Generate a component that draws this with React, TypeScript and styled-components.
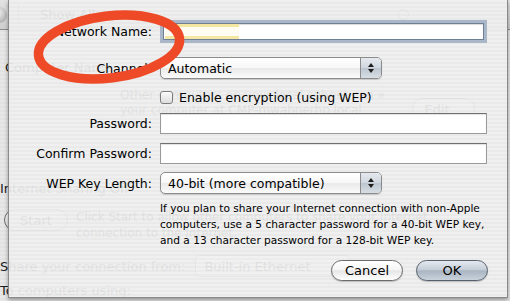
import React from "react"
import styled, { createGlobalStyle } from "styled-components"

const GlobalStyle = createGlobalStyle`
  html, body {
    margin: 0;
    padding: 0;
    background: #e6e6e6;
  }
  body {
    font-family: "DejaVu Sans", "Liberation Sans", sans-serif;
  }
`

const Screen = styled.div`
  position: relative;
  width: 510px;
  height: 301px;
  overflow: hidden;
  background: #e4e4e4;
`

/* ---------- the preferences window behind the sheet ---------- */

const Window = styled.div`
  display: flex;
  flex-direction: column;
  width: 100%;
  height: 100%;
  color: #1e1e1e;
  font-size: 13px;
  background: repeating-linear-gradient(
    to bottom,
    #e8e8e8 0 2px,
    #e2e2e2 2px 4px
  );
`

const Toolbar = styled.div`
  display: flex;
  align-items: center;
  height: 30px;
  box-sizing: border-box;
  border-bottom: 1px solid #8c8c8c;
  background: linear-gradient(#e2e2e2, #cfcfcf);
`

const ToolRound = styled.div`
  width: 16px;
  height: 16px;
  margin-left: -9px;
  border-radius: 50%;
  background: radial-gradient(circle at 40% 35%, #f4f4f4, #9a9a9a);
`

const ToolDivider = styled.div`
  width: 1px;
  height: 22px;
  margin-left: 11px;
  background: #9c9c9c;
`

const ToolLabel = styled.span`
  margin-left: 21px;
  font-size: 13px;
`

const ToolSearch = styled.div`
  width: 9px;
  height: 9px;
  margin-left: auto;
  margin-right: 101px;
  border: 1.5px solid #555;
  border-radius: 50%;
`

const PaneRow = styled.div<{ $top: number; $left?: number; $h?: number }>`
  display: flex;
  align-items: center;
  margin-top: ${(p) => p.$top}px;
  padding-left: ${(p) => p.$left ?? 0}px;
  height: ${(p) => (p.$h ? `${p.$h}px` : "auto")};
  white-space: nowrap;
`

const PaneText = styled.div`
  width: 292px;
  margin-left: 120px;
  font-size: 12px;
  line-height: 15px;
  overflow: hidden;
`

const GhostButton = styled.div<{ $w: number; $ml?: number; $mt?: number }>`
  display: flex;
  align-items: center;
  justify-content: center;
  align-self: flex-start;
  width: ${(p) => p.$w}px;
  height: 22px;
  margin-left: ${(p) => p.$ml ?? 0}px;
  margin-top: ${(p) => p.$mt ?? 0}px;
  box-sizing: border-box;
  border: 1px solid #6d6d6d;
  border-radius: 11px;
  background: linear-gradient(#ffffff, #dcdcdc);
  font-size: 13px;
`

const GhostPopup = styled.div`
  display: flex;
  align-items: center;
  width: 155px;
  height: 22px;
  margin-left: 10px;
  padding-left: 8px;
  box-sizing: border-box;
  border: 1px solid #777;
  border-radius: 5px;
  background: #fff;
`

const PaneDesc = styled.div`
  margin-left: 8px;
  font-size: 12px;
  line-height: 16px;
`

/* ---------- the sheet ---------- */

const Sheet = styled.div`
  position: absolute;
  left: 8px;
  top: 0;
  width: 500px;
  height: 298px;
  box-sizing: border-box;
  padding-top: 20px;
  border: 1px solid #8a8a8a;
  border-top: none;
  background: repeating-linear-gradient(
    to bottom,
    rgba(240, 240, 240, 0.935) 0 2px,
    rgba(234, 234, 234, 0.935) 2px 4px
  );
  box-shadow: 0 2px 4px rgba(0, 0, 0, 0.35);
  color: #000;
  font-size: 12.5px;
`

const Row = styled.div<{ $mt?: number; $h: number }>`
  display: grid;
  grid-template-columns: 143px 327px;
  column-gap: 8px;
  align-items: center;
  height: ${(p) => p.$h}px;
  margin-top: ${(p) => p.$mt ?? 0}px;
`

const Label = styled.label`
  text-align: right;
  white-space: nowrap;
`

const TextField = styled.div<{ $focused?: boolean }>`
  position: relative;
  height: 100%;
  box-sizing: border-box;
  background: #fff;
  border: 1px solid #9a9a9a;
  border-top-color: #6f6f6f;
  box-shadow: inset 0 1px 1px rgba(0, 0, 0, 0.12);
  ${(p) =>
    p.$focused &&
    `
    margin: 3px;
    height: calc(100% - 6px);
    border-color: #6f7f95;
    box-shadow: 0 0 0 3px #a9b7c9, inset 0 1px 1px rgba(0,0,0,0.15);
  `}
`

const Selection = styled.span`
  position: absolute;
  left: 1px;
  top: 0;
  width: 74px;
  height: 100%;
  box-sizing: border-box;
  border-top: 3px solid #f3e7a2;
  border-bottom: 3px solid #f3e7a2;
  background: #fffdf2;
`

const Popup = styled.div`
  display: flex;
  align-items: center;
  width: 222px;
  height: 100%;
  box-sizing: border-box;
  border: 1px solid #8b8b8b;
  border-radius: 5px;
  background: linear-gradient(#ffffff 0%, #f7f7f7 50%, #e9e9e9 51%, #fbfbfb 100%);
  box-shadow: 0 1px 1px rgba(0, 0, 0, 0.15);
  overflow: hidden;
`

const PopupText = styled.span`
  flex: 1;
  padding-left: 7px;
  white-space: nowrap;
`

const PopupArrows = styled.div`
  display: flex;
  flex-direction: column;
  align-items: center;
  justify-content: center;
  gap: 2px;
  width: 20px;
  height: 100%;
  border-left: 1px solid #8b8b8b;
  background: linear-gradient(#e6eaef 0%, #cfd6de 50%, #bcc5cf 51%, #d8dee5 100%);
`

const Arrow = styled.span<{ $down?: boolean }>`
  width: 0;
  height: 0;
  border-left: 3px solid transparent;
  border-right: 3px solid transparent;
  ${(p) =>
    p.$down ? "border-top: 4px solid #1d1d1d;" : "border-bottom: 4px solid #1d1d1d;"}
`

const CheckRow = styled.div`
  display: flex;
  align-items: center;
  gap: 6px;
  white-space: nowrap;
`

const CheckBox = styled.span`
  width: 13px;
  height: 13px;
  box-sizing: border-box;
  border: 1px solid #7d7d7d;
  border-radius: 3px;
  background: linear-gradient(#fafafa, #dedede);
  box-shadow: inset 0 1px 1px rgba(255, 255, 255, 0.9);
`

const Help = styled.div`
  margin: 6px 0 0 151px;
  font-size: 10.6px;
  line-height: 16px;
  white-space: nowrap;
`

const Buttons = styled.div`
  display: flex;
  justify-content: flex-end;
  gap: 13px;
  height: 21px;
  margin-top: 12px;
  padding-right: 19px;
`

const PushButton = styled.button<{ $default?: boolean }>`
  width: 72px;
  height: 21px;
  padding: 0;
  border: 1px solid ${(p) => (p.$default ? "#55606d" : "#6b6b6b")};
  border-radius: 11px;
  font-family: inherit;
  font-size: 13px;
  color: #000;
  background: ${(p) =>
    p.$default
      ? "linear-gradient(#e4e9ef 0%, #c6ced8 45%, #aab5c2 52%, #c9d2dc 100%)"
      : "linear-gradient(#ffffff 0%, #f6f6f6 45%, #e6e6e6 52%, #ffffff 100%)"};
  box-shadow: 0 1px 1px rgba(0, 0, 0, 0.2);
`

const Marker = styled.svg`
  position: absolute;
  left: 0;
  top: 0;
  pointer-events: none;
`

export default function App() {
  return (
    <>
      <GlobalStyle />
      <Screen>
        <Window>
          <Toolbar>
            <ToolRound />
            <ToolDivider />
            <ToolLabel>Show All</ToolLabel>
            <ToolSearch />
          </Toolbar>
          <PaneRow $top={28} $left={5} $h={18}>
            Computer Name:
          </PaneRow>
          <PaneRow $top={10}>
            <PaneText>
              Other computers on your local subnet can »
              <br />
              your computer at CMP-mwabnerhp.local
            </PaneText>
            <GhostButton $w={63} $mt={12}>
              Edit…
            </GhostButton>
          </PaneRow>
          <PaneRow $top={59} $left={0} $h={18}>
            Internet Sharing Off
          </PaneRow>
          <PaneRow $top={12}>
            <GhostButton $w={64} $ml={4}>
              Start
            </GhostButton>
            <PaneDesc>
              Click Start to allow other computers to share your Internet
              <br />
              connection to the Internet.
            </PaneDesc>
          </PaneRow>
          <PaneRow $top={13} $h={24}>
            Share your connection from:
            <GhostPopup>Built-in Ethernet</GhostPopup>
          </PaneRow>
          <PaneRow $top={3} $h={18}>
            To computers using:
          </PaneRow>
        </Window>

        <Sheet>
          <Row $h={23}>
            <Label>Network Name:</Label>
            <TextField $focused>
              <Selection />
            </TextField>
          </Row>
          <Row $mt={14} $h={22}>
            <Label>Channel:</Label>
            <Popup>
              <PopupText>Automatic</PopupText>
              <PopupArrows>
                <Arrow />
                <Arrow $down />
              </PopupArrows>
            </Popup>
          </Row>
          <Row $mt={10} $h={16}>
            <span />
            <CheckRow>
              <CheckBox />
              Enable encryption (using WEP)
            </CheckRow>
          </Row>
          <Row $mt={8} $h={21}>
            <Label>Password:</Label>
            <TextField />
          </Row>
          <Row $mt={9} $h={21}>
            <Label>Confirm Password:</Label>
            <TextField />
          </Row>
          <Row $mt={8} $h={22}>
            <Label>WEP Key Length:</Label>
            <Popup>
              <PopupText>40-bit (more compatible)</PopupText>
              <PopupArrows>
                <Arrow />
                <Arrow $down />
              </PopupArrows>
            </Popup>
          </Row>
          <Help>
            If you plan to share your Internet connection with non-Apple
            <br />
            computers, use a 5 character password for a 40-bit WEP key,
            <br />
            and a 13 character password for a 128-bit WEP key.
          </Help>
          <Buttons>
            <PushButton>Cancel</PushButton>
            <PushButton $default>OK</PushButton>
          </Buttons>
        </Sheet>

        <Marker width="510" height="301" viewBox="0 0 510 301">
          <ellipse
            cx="109"
            cy="47"
            rx="71"
            ry="31"
            fill="none"
            stroke="#ee4a28"
            strokeWidth="9.5"
            transform="rotate(-7 109 47)"
          />
        </Marker>
      </Screen>
    </>
  )
}
